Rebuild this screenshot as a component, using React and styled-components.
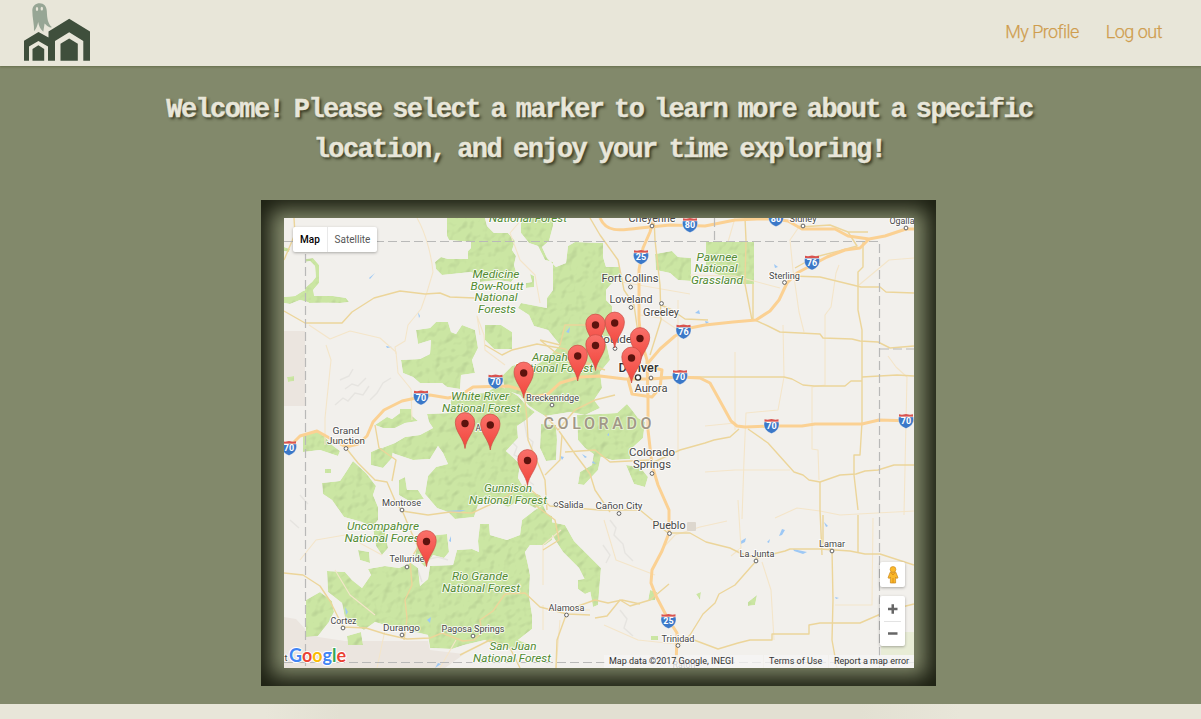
import React from "react";
import styled, { createGlobalStyle } from "styled-components";

const GlobalStyle = createGlobalStyle`
  * { box-sizing: border-box; }
  html, body { margin: 0; height: 100%; overflow: hidden; }
  body { background: #e8e6d9; font-family: Roboto, "Liberation Sans", sans-serif; }
`;

const Page = styled.div`
  display: flex;
  flex-direction: column;
  height: 719px;
  overflow: hidden;
`;

const Header = styled.header`
  position: relative;
  z-index: 1;
  flex: none;
  display: flex;
  justify-content: space-between;
  align-items: center;
  height: 66px;
  padding: 0 39px 0 24px;
  background: #e8e6d9;
  box-shadow: 0 1px 2px rgba(70, 80, 40, 0.45);
`;

const Logo = styled.svg`
  display: block;
  width: 67px;
  height: 60px;
  margin-bottom: 2px;
`;

const Nav = styled.nav`
  display: flex;
  gap: 27px;
  padding-bottom: 3px;
`;

const NavLink = styled.a`
  color: #cf9d4e;
  font-size: 18px;
  font-weight: 300;
  line-height: 24px;
  white-space: nowrap;
  letter-spacing: ${(p) => p.$spacing};
  -webkit-text-stroke: 0.25px #cf9d4e;
`;

const Hero = styled.main`
  flex: none;
  height: 638px;
  padding-top: 24px;
  display: flex;
  flex-direction: column;
  align-items: center;
  background: #82896b;
`;

const Title = styled.h1`
  margin: 0 2px 30px 0;
  display: flex;
  flex-direction: column;
  align-items: center;
  color: #e8e6d9;
  font-family: "Liberation Mono", monospace;
  font-size: 27px;
  font-weight: 700;
  line-height: 40px;
  text-shadow: 2px 2px 3px rgba(40, 40, 20, 0.85);
  -webkit-text-stroke: 0.4px #e8e6d9;
`;

const TitleLine = styled.span`
  white-space: pre;
  letter-spacing: -1.6px;
  word-spacing: ${(p) => p.$gap};
`;

const Frame = styled.section`
  width: 675px;
  height: 486px;
  margin-right: 4px;
  padding: 18px 22px 18px 23px;
  box-shadow: inset 0 0 20px 10px #1b1e11;
`;

const MapView = styled.div`
  position: relative;
  width: 630px;
  height: 450px;
  overflow: hidden;
`;

const MapCanvas = styled.svg`
  display: block;
  width: 630px;
  height: 450px;
`;

const TypeSwitch = styled.div`
  position: absolute;
  left: 9px;
  top: 9px;
  display: flex;
  height: 25px;
  border-radius: 2px;
  background: #fff;
  box-shadow: 0 1px 3px rgba(0, 0, 0, 0.3);
`;

const TypeButton = styled.button`
  width: ${(p) => (p.$active ? "34px" : "50px")};
  padding: 0;
  border: 0;
  border-left: ${(p) => (p.$active ? "0" : "1px solid #e9e9e9")};
  background: none;
  color: ${(p) => (p.$active ? "#000" : "#565656")};
  font: ${(p) => (p.$active ? 500 : 400)} 10px Roboto, sans-serif;
`;

const ControlStack = styled.div`
  position: absolute;
  right: 9px;
  bottom: 22px;
  display: flex;
  flex-direction: column;
  gap: 9px;
`;

const Control = styled.div`
  display: flex;
  flex-direction: column;
  align-items: center;
  justify-content: center;
  width: 25px;
  height: ${(p) => (p.$tall ? "50px" : "25px")};
  border-radius: 2px;
  background: #fff;
  box-shadow: 0 1px 3px rgba(0, 0, 0, 0.3);
  svg { display: block; }
`;

const ControlRule = styled.div`
  width: 17px;
  height: 1px;
  background: #e3e3e3;
`;

const Attribution = styled.div`
  position: absolute;
  right: 0;
  bottom: 0;
  display: flex;
  gap: 1px;
  height: 13px;
  color: #333;
  font-size: 9px;
  line-height: 12px;
  white-space: nowrap;
`;

const Credit = styled.span`
  width: ${(p) => p.$width};
  padding: 0 5px;
  background: rgba(245, 245, 245, 0.75);
`;

const Footer = styled.footer`
  flex: 1;
  background: linear-gradient(90deg, #e8e6d9 265px, #e2e0d2 340px, #e2e0d2 860px, #e8e6d9 960px);
`;

const forests = [
  "305,259 313,258 319,265 319,283 313,290 314,296 333,296 346,298 349,302 340,303 308,302 300,300 290,304 284,303 284,297 295,296 303,291 310,289 316,279 315,266 310,261 305,262",
  "305,288 312,282 316,277 317,283 313,290 314,297 345,298 348,302 309,303 305,299",
  "284,247 290,249 289,252 284,251",
  "447,218 485,218 487,226 494,233 508,233 515,241 512,250 516,256 514,265 517,275 511,282 498,280 480,282 480,277 471,272 442,275 436,269 435,262 441,257 448,259 468,259 468,251 471,248 471,242 449,240 447,236",
  "521,218 553,218 553,226 549,241 542,247 547,258 556,267 566,263 568,246 575,242 603,243 603,257 606,267 620,267 620,276 612,283 606,290 606,300 612,306 612,330 606,342 610,360 600,372 602,388 594,400 600,408 585,415 570,412 545,416 535,410 528,405 520,395 505,390 502,376 512,366 524,362 534,366 548,358 560,345 548,330 534,326 529,315 518,308 521,303 547,308 547,298 553,290 553,262 545,260 538,246 529,243 521,233",
  "530,274 534,276 534,287 526,288 526,283 532,282",
  "416,330 430,328 436,322 448,322 451,332 456,334 462,325 475,330 478,348 472,360 475,373 461,375 460,389 447,387 442,383 420,383 413,377 403,373 401,360 420,359 430,354 431,340 418,344",
  "485,325 501,325 512,332 512,349 494,349 485,340",
  "375,425 387,417 392,419 400,413 400,409 411,409 412,416 418,421 405,423 395,428 383,428",
  "427,414 450,413 451,400 465,394 486,393 498,385 508,390 518,396 528,407 535,412 526,420 517,426 518,438 506,451 520,464 518,478 525,490 540,495 547,504 535,508 520,500 508,507 490,498 478,505 474,517 455,519 448,512 437,508 425,494 428,476 436,467 448,464 443,453 438,446 430,459 413,460 395,454 382,448 395,443 405,437 420,435 433,428 429,422",
  "371,452 380,448 393,449 392,458 383,468 371,465",
  "303,436 315,430 325,437 332,445 340,451 338,456 320,450 303,452",
  "325,469 331,469 331,473 325,473",
  "287,377 294,376 294,381 288,382",
  "322,483 340,481 346,472 353,461 366,473 376,486 373,495 378,507 378,520 372,527 362,522 344,517 332,500 323,494",
  "373,528 384,528 388,548 382,555 376,546",
  "358,550 369,552 370,563 360,560",
  "399,480 405,477 407,490 418,490 424,499 409,501 399,495",
  "417,543 428,536 447,534 449,552 444,558 433,555 425,567 415,557",
  "306,600 320,592 332,601 334,612 329,622 318,636 306,637",
  "327,571 345,572 352,580 362,588 371,575 368,569 385,566 399,568 411,563 418,568 420,586 428,579 430,566 453,565 457,550 472,549 479,552 478,541 480,524 489,524 490,535 507,540 520,535 522,520 535,510 552,516 552,540 545,545 530,545 525,552 528,565 530,575 529,596 532,615 532,629 518,640 528,644 525,648 500,648 485,640 464,645 452,649 430,648 428,635 415,632 395,628 375,622 364,630 345,618 342,603 328,592",
  "347,636 361,632 363,645 348,645",
  "535,510 543,505 551,522 565,525 574,541 588,555 601,568 598,605 593,607 590,590 579,568 563,552 552,535",
  "578,580 595,577 597,589 585,594 578,589",
  "577,415 600,414 617,413 627,404 632,410 638,418 645,422 643,438 632,448 630,459 612,460 595,455 585,448 578,440",
  "541,424 556,425 557,440 556,460 546,461 540,448",
  "580,472 592,465 594,452 602,451 598,470 584,485 578,484",
  "626,465 640,467 648,477 645,487 634,484",
  "655,254 672,251 678,257 691,258 691,281 678,280 670,273 656,270",
  "706,242 754,242 754,284 742,284 706,270",
  "650,590 657,592 655,600 648,601",
  "696,594 701,592 700,600",
  "748,602 757,595 755,605 748,606",
  "651,636 658,636 658,640 651,640",
];

const minorRoads = [
  "M417,218 C427,235 432,260 433,272 L427,292 421,309 408,325 405,341 395,347 396,354",
  "M309,325 L330,339 350,331 380,338 396,352 398,373 411,389",
  "M480,335 L477,316 484,335 485,350 505,365",
  "M523,218 L510,233 520,260 535,275 540,303",
  "M735,218 L728,242 M805,218 L790,240 793,270 799,312 804,332",
  "M839,265 L836,273 831,307 825,315 825,385 812,387 812,449 818,450 819,480",
  "M859,285 L889,260 914,258 M783,325 L784,377 778,410 746,413 744,460 742,519",
  "M640,315 L660,318 678,330 M678,300 L678,460 M690,275 L735,276 780,288",
  "M735,352 L735,430 M705,426 L735,423 M610,280 L690,294",
  "M705,472 L735,470 790,470 M775,518 L797,508 820,511 840,515 914,511",
  "M888,356 L896,367 907,377 906,421 904,515",
  "M661,550 L675,535 700,527 727,521 M738,500 L741,548 731,556",
  "M762,562 L771,590 774,640 M835,605 L872,605 873,518",
  "M325,445 L325,418 331,360 326,345 M411,389 L412,420",
  "M555,610 L590,610 M543,585 L543,545 561,530 M543,605 L543,630",
  "M300,560 L316,540 345,535 382,555 M335,570 L350,595 375,615",
  "M385,630 L377,668 M456,640 L440,668 M560,620 L556,668",
  "M604,520 L616,560 655,575 M604,625 L638,640 676,644",
];

const roads = [
  "M284,311 L305,323 342,323 352,312 374,298 400,291 425,294 440,293 450,297 475,298 500,300",
  "M590,218 L600,235 618,260 624,290 634,305 639,340",
  "M654,218 L655,240 660,285 661,320 650,355",
  "M661,305 L672,310 685,319 708,320 M745,218 L746,240 745,284 752,320 M753,284 L753,320",
  "M800,227 L830,225 848,232 868,232 M848,232 L857,246 839,251 815,257 795,268 M792,276 L820,277 861,287 880,287 886,292 914,293",
  "M863,242 L863,267 858,272 858,310 862,330 862,422 860,455 854,455 854,475 858,510",
  "M755,320 L768,326 780,332 820,334 823,338 852,339 860,341 878,342 890,348 914,346",
  "M660,377 L784,377 792,379 803,385 814,386 845,386 851,381 862,381 M862,377 L897,375 914,376",
  "M748,429 L768,443 794,472 803,475 809,480 820,482 840,475 856,474 865,471 878,470 894,465 914,465",
  "M820,482 L820,510 822,555 M654,462 L680,450 705,443 714,440 730,437 739,429",
  "M524,390 L527,420 528,440 545,480 547,510",
  "M559,431 L575,454 590,474 595,490 610,512 M565,452 L595,450 610,462 650,460",
  "M562,435 L560,460 545,475 M545,415 L558,430 575,410 595,400 615,395",
  "M540,340 L560,345 565,325 585,325 610,330 M540,340 L555,352 575,360 605,370",
  "M485,345 L502,355 512,350 537,344 565,349 600,370",
  "M346,448 L358,463 375,480 387,482 396,503 402,511 428,515 450,512 472,513 500,500 525,485 550,506 600,510 640,510 668,533",
  "M375,425 L379,448 396,460 392,481 M402,510 L409,527 418,547 410,560 412,585 405,600 407,618 404,640",
  "M284,573 L303,575 320,586 330,601 343,627 366,628 385,634 407,639 430,638 442,633 463,641 474,640 482,632 480,620 493,611 505,594 525,593 540,607 567,614 590,615",
  "M566,615 L557,640 556,668 M567,610 L595,600 608,603 622,600 640,604 M543,550 L559,540 555,520 535,505",
  "M595,618 L607,616 620,600 630,606 650,600 669,584",
  "M668,533 L690,533 706,542 730,548 740,553 757,558 785,551 790,549 820,549 850,551 865,554 880,554 914,565",
  "M757,560 L735,585 719,594 715,603 703,614 690,635 678,645 M694,640 L718,649 738,643 750,640 772,640 772,634 809,634 809,625 820,623 860,623 890,610 914,604",
  "M823,515 L823,543 832,550 833,600 832,640 837,668 M858,515 L858,552",
  "M284,260 L295,234 294,218 M460,655 L490,640 510,648 520,668",
];

const highways = [
  "M600,218 C606,232 618,231 640,228 L670,225 705,226 735,220 757,219 775,219 788,221 802,229 835,229 848,236 869,239 885,236 906,229 914,229",
  "M869,239 L860,248 845,250 827,257 812,265 797,273 787,283 779,300 770,311 756,320 733,322 705,325 690,328 675,336 660,349 648,363",
  "M654,218 L650,232 643,248 639,270 639,320 641,340 647,360 648,400 648,430 652,465 658,485 669,510 669,533 662,551 652,570 651,583 656,596 667,617 677,633 676,668",
  "M284,446 L291,445 300,436 317,431 333,440 346,447 358,444 367,436 373,422 384,410 402,401 430,395 448,398 461,395 473,387 508,386 522,390 534,397 548,394 560,383 580,377 600,376 625,379 650,379 680,377 700,378 710,383 720,401 731,421 737,426 745,427 775,426 802,426 815,424 862,424 879,420 914,421",
  "M628,379 L632,394 652,397 660,388 662,370 648,366 M648,369 L633,363 629,380",
];

const labels = [
  ["Cheyenne", 652, 222, 47, 10.5],
  ["Sidney", 803, 222, 27, 9],
  ["Ogalla", 902, 224, 25, 9],
  ["Sterling", 784.5, 278.5, 31, 9],
  ["Fort Collins", 630, 281.5, 57, 11.3],
  ["Loveland", 631, 302.5, 43, 10.8],
  ["Greeley", 661, 316, 36, 10.8],
  ["Boulder", 616, 342.5, 40, 11],
  ["Aurora", 651, 391.5, 33, 11],
  ["Breckenridge", 552.5, 401, 53, 9.3],
  ["Grand", 346, 434, 27, 9.8],
  ["Junction", 346, 444, 38, 9.8],
  ["Aspen", 487, 431, 23, 9],
  ["Colorado", 652, 456, 46, 11],
  ["Springs", 652, 467.5, 38, 11],
  ["Salida", 571, 507.5, 25, 9.3],
  ["Cañon City", 619, 508.5, 47, 9.8],
  ["Montrose", 401.5, 506, 39, 9.3],
  ["Pueblo", 669, 529, 33, 10.8],
  ["Lamar", 832, 547, 26, 9.3],
  ["La Junta", 757, 557, 35, 9.5],
  ["Telluride", 407, 562, 35, 9.3],
  ["Alamosa", 566.5, 611, 36, 9.3],
  ["Cortez", 343.5, 624, 26, 9.3],
  ["Durango", 401.5, 630.5, 37, 9.8],
  ["Pagosa Springs", 473, 632, 63, 9.2],
  ["Trinidad", 678, 641.5, 33, 9.3],
  ["Raton", 684, 668, 23, 9],
  ["t", 286, 661, 3, 8.5],
];

const forestLabels = [
  ["National Forest", 528, 222, 78],
  ["Medicine", 496, 277.5, 47], ["Bow-Routt", 497, 289.5, 53], ["National", 496, 301, 43], ["Forests", 497, 312.5, 38],
  ["Pawnee", 717, 260.5, 41], ["National", 716, 272, 43], ["Grassland", 717, 284, 52],
  ["Arapaho", 553, 360.5, 42], ["National Forest", 554, 371.5, 78],
  ["White River", 480, 399.5, 58], ["National Forest", 481, 411.5, 78],
  ["Gunnison", 508, 492, 48], ["National Forest", 508, 504, 78],
  ["Uncompahgre", 383, 530, 72], ["National Forest", 384, 542, 79],
  ["Rio Grande", 480, 579.5, 56], ["National Forest", 481, 591.5, 78],
  ["San Juan", 513, 649.5, 47], ["National Forest", 512, 661.5, 78],
];

const towns = [
  [652, 226], [803, 226], [906, 228], [784.5, 282.5], [630.5, 287], [631, 307.5], [661.5, 303.5],
  [615, 348.5], [651, 378], [552, 405], [346, 448.5], [652, 473.5], [556, 504.5], [619, 513.5],
  [402, 510], [669.5, 533.5], [832, 551], [756, 561], [407, 567], [566.5, 615], [343, 628],
  [402, 635], [473, 636], [678, 645.5],
];

const shields = [
  [690, 225, 80], [776, 219, 80], [641, 257, 25], [812, 262.5, 76], [683.5, 331.5, 76], [680, 377, 70],
  [495.5, 381.5, 70], [421, 397.5, 70], [289, 448, 70], [771.5, 426, 70], [906, 421, 70], [668.5, 621, 25],
];

const markers = [
  [614.7, 323], [595.5, 325], [640, 338.5], [595.5, 345.5], [577.7, 356], [631.5, 358],
  [523.7, 373], [465, 423.5], [490.3, 425], [527.5, 460.5], [426.5, 541.5],
];

const lakes = [
  "M741,541l5,-3 -1,4 -4,2z", "M779,536l3,-7 3,1 -3,5z", "M767,542l3,-3 -1,4z", "M793,549l14,3 -4,2 -9,-3z",
  "M824,522l4,4 -2,1z", "M835,597l4,1 -3,1z", "M774,264l4,3 -3,1z", "M695,313l4,-3 1,4z", "M560,456l4,1 -2,3z",
  "M582,454l5,3 -2,1z", "M566,332l4,-5 -1,6z", "M593,461l3,3 -4,-1z", "M418,312l2,4 -1,2z", "M427,620l4,-3 -1,6z",
  "M345,607l3,5 -2,3z", "M435,668l3,-5 3,1z", "M449,541l2,-5 0,6z", "M446,511l20,-1 -10,3z", "M386,346l6,1 -5,1z",
  "M369,278l6,-5 -5,6z", "M607,435l2,-2 0,3z", "M705,321l4,1 -3,2z",
];

function GhostHouseLogo() {
  return (
    <Logo viewBox="24 2 67 60">
      <g fill="#3f4f3c">
        <path d="M24,60.7V40.8L38.5,32 48.5,37.5V31.6L69.2,18.7 90,31.6V60.7H83.3V41L69.2,32.3 55,41V60.7H48V46.5L38.4,41 29,46.5V60.7Z" />
        <path d="M60.5,60.7V43.8L69.2,38.5 77.8,43.8V60.7Z" />
        <path d="M32.5,60.7V49L38.4,45.3 44.2,49V60.7Z" />
      </g>
      <path fill="#97a695" d="M32.3,10C32.8,5.5 35.8,3.2 39.7,3.2C44,3.2 46.5,6.2 46.8,11C47.2,18 47.4,23 52,27.3C49.5,27.8 47.4,26.5 46,24.8L44.6,23.5 43.3,31.7C40,29 38.9,26 38.2,22C37.2,26.4 36,29 34,31.2C34.5,25 32.2,18 32.3,10Z" />
      <ellipse cx="37" cy="9" rx="1.2" ry="1.9" fill="#e8e6d9" />
      <ellipse cx="41.8" cy="8.7" rx="1.2" ry="1.9" fill="#e8e6d9" />
    </Logo>
  );
}

function Shield({ x, y, number }) {
  return (
    <g transform={`translate(${x} ${y})`}>
      <path d="M-7,-6.8 L-4,-6.2 0,-7 4,-6.2 7,-6.8 7,-4.2H-7Z" fill="#d9534f" />
      <path d="M-7.3,-4H7.3C8.6,2.5 4.5,5.8 0,7.6C-4.5,5.8 -8.6,2.5 -7.3,-4Z" fill="#3b78c8" stroke="#f4f4f4" strokeWidth="0.4" />
      <text y="3.4" textAnchor="middle" fontSize="9" fontWeight="700" fill="#fff">{number}</text>
    </g>
  );
}

function Marker({ x, y }) {
  return (
    <g transform={`translate(${x} ${y})`}>
      <path d="M0,25C-1.2,15 -9.7,8.5 -9.7,-1.2A9.7,9.7 0 0 1 9.7,-1.2C9.7,8.5 1.2,15 0,25Z" fill="url(#pin)" stroke="#ca4a42" strokeWidth="0.7" />
      <circle r="3.7" fill="#5d130e" />
    </g>
  );
}

function TerrainMap() {
  return (
    <MapCanvas viewBox="284 218 630 450" fontFamily="Roboto, sans-serif">
      <defs>
        <linearGradient id="pin" x1="0" y1="0" x2="0" y2="1">
          <stop offset="0" stopColor="#f9706a" />
          <stop offset="1" stopColor="#f2453b" />
        </linearGradient>
        <filter id="relief" x="0" y="0" width="1" height="1" colorInterpolationFilters="sRGB">
          <feTurbulence type="fractalNoise" baseFrequency="0.1" numOctaves="2" seed="8" result="noise" />
          <feDiffuseLighting in="noise" surfaceScale="0.75" diffuseConstant="1.39" lightingColor="#fff" result="light">
            <feDistantLight azimuth="225" elevation="46" />
          </feDiffuseLighting>
          <feComposite in="SourceGraphic" in2="light" operator="arithmetic" k1="0.5" k2="0.5" result="lit" />
          <feComposite in="lit" in2="SourceGraphic" operator="in" />
        </filter>
      </defs>
      <rect x="284" y="218" width="630" height="450" fill="#f2f0ec" />
      <g fill="#ebe5df">
        <path d="M284,331H305V406H284Z" />
        <path d="M284,617L296,619 306,630 318,637 345,641H428L430,650 464,654 445,668H284Z" />
      </g>
      <path d="M881,632H914V655H881Z" fill="#e8ecd6" />
      <g fill="none" stroke="#e6e4e0" strokeWidth="1.4">
        <path d="M335,405l8,-7 5,3 7,-8 8,2 6,-9 M345,389l7,-5 6,2 8,-8 M370,400l7,-7 6,-10 8,-5 M340,380l9,-4 4,-7" />
        <path d="M510,440l7,7 -3,8 9,4 -4,9 10,3 -2,9 7,5 M524,420l3,17 6,5 -2,9 7,8" />
        <path d="M610,520l6,8 -2,7 9,9 2,9 8,8 M620,610l7,9 -3,9 9,8 M603,545l7,10 -4,8" />
        <path d="M425,560l13,-3 10,3 M418,570l4,12 M300,495l8,9 M290,520l9,8" />
      </g>
      <g fill="#cbe6a3" filter="url(#relief)">
        {forests.map((points) => <polygon key={points} points={points} />)}
      </g>
      <g fill="#9dc8f5">{lakes.map((d) => <path key={d} d={d} />)}</g>
      <g fill="none" strokeLinejoin="round">
        <g stroke="#f4e5c9" strokeWidth="1.1">{minorRoads.map((d) => <path key={d} d={d} />)}</g>
        <g stroke="#ecd59a" strokeWidth="1.4">{roads.map((d) => <path key={d} d={d} />)}</g>
        <g stroke="#fbd193" strokeWidth="3">{highways.map((d) => <path key={d} d={d} />)}</g>
        <g stroke="#b9b9b8" strokeWidth="1.2" strokeDasharray="9 4">
          <path d="M284,241.5H879.5V668" />
          <path d="M305.5,241V668" />
          <path d="M714.5,218V241" />
          <path d="M880,349H914" />
          <path d="M284,662.5H914" />
        </g>
      </g>
      <rect x="687" y="522" width="9" height="9" rx="1" fill="#ddd7ce" />
      {shields.map(([x, y, number]) => <Shield key={`${x}-${y}`} x={x} y={y} number={number} />)}
      <g fill="#fff" stroke="#626262" strokeWidth="1">
        {towns.map(([x, y]) => <circle key={`${x}-${y}`} cx={x} cy={y} r="1.9" />)}
        <circle cx="638" cy="377.5" r="2.6" stroke="#333" strokeWidth="1.3" />
      </g>
      <g textAnchor="middle" paintOrder="stroke" stroke="#fff" strokeOpacity="0.8" strokeWidth="2" strokeLinejoin="round">
        <g fill="#528b32" fontStyle="italic" fontSize="11.8">
          {forestLabels.map(([text, x, y, width]) => (
            <text key={`${text}-${y}`} x={x} y={y} textLength={width} lengthAdjust="spacingAndGlyphs">{text}</text>
          ))}
        </g>
        <g fill="#484848">
          {labels.map(([text, x, y, width, size]) => (
            <text key={text} x={x} y={y} textLength={width} lengthAdjust="spacingAndGlyphs" fontSize={size}>{text}</text>
          ))}
        </g>
        <text x="638.5" y="371.5" textLength="40" fontSize="12.8" fontWeight="500" fill="#333">Denver</text>
        <text x="597.5" y="429" textLength="108" fontSize="16" fontWeight="500" fill="#a19787" strokeOpacity="0.5">COLORADO</text>
      </g>
      {markers.map(([x, y]) => <Marker key={`${x}-${y}`} x={x} y={y} />)}
      <text x="289" y="661.5" textLength="57" lengthAdjust="spacingAndGlyphs" fontSize="19" fontWeight="700" fontFamily="Lato, sans-serif" paintOrder="stroke" stroke="#fff" strokeWidth="2">
        <tspan fill="#4285f4">G</tspan>
        <tspan fill="#ea4335">o</tspan>
        <tspan fill="#fbbc05">o</tspan>
        <tspan fill="#4285f4">g</tspan>
        <tspan fill="#34a853">l</tspan>
        <tspan fill="#ea4335">e</tspan>
      </text>
    </MapCanvas>
  );
}

function Pegman() {
  return (
    <svg width="12" height="18" viewBox="0 0 12 18">
      <path d="M3.2,6.2H8.8L11,11.8 9.6,12.4 8.6,11V17H3.4V11L2.4,12.4 1,11.8Z" fill="#fbb829" stroke="#c9861c" strokeWidth="0.7" />
      <path d="M4,6.5L6,9 8,6.5M6,12V17" fill="none" stroke="#d98a15" strokeWidth="0.9" />
      <circle cx="6" cy="3.4" r="2.9" fill="#fbb829" stroke="#c9861c" strokeWidth="0.6" />
    </svg>
  );
}

function ZoomIcon({ plus }) {
  return (
    <svg width="25" height="24" viewBox="0 0 25 24">
      <path d={plus ? "M8,12H17.5M12.75,7.3V16.7" : "M8,11.5H17.5"} stroke="#666" strokeWidth="2.5" />
    </svg>
  );
}

export default function App() {
  return (
    <Page>
      <GlobalStyle />
      <Header>
        <GhostHouseLogo />
        <Nav>
          <NavLink $spacing="-0.55px">My Profile</NavLink>
          <NavLink $spacing="-0.5px">Log out</NavLink>
        </Nav>
      </Header>
      <Hero>
        <Title>
          <TitleLine $gap="-3.9px">Welcome! Please select a marker to learn more about a specific</TitleLine>
          <TitleLine $gap="-2.5px">location, and enjoy your time exploring!</TitleLine>
        </Title>
        <Frame>
          <MapView>
            <TerrainMap />
            <TypeSwitch>
              <TypeButton $active>Map</TypeButton>
              <TypeButton>Satellite</TypeButton>
            </TypeSwitch>
            <ControlStack>
              <Control><Pegman /></Control>
              <Control $tall>
                <ZoomIcon plus />
                <ControlRule />
                <ZoomIcon />
              </Control>
            </ControlStack>
            <Attribution>
              <Credit $width="159px">Map data ©2017 Google, INEGI</Credit>
              <Credit $width="64px">Terms of Use</Credit>
              <Credit $width="85px">Report a map error</Credit>
            </Attribution>
          </MapView>
        </Frame>
      </Hero>
      <Footer />
    </Page>
  );
}
